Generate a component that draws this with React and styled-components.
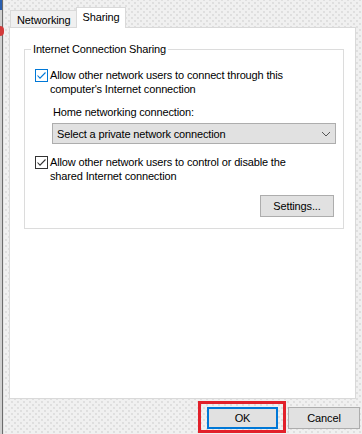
import React from "react";
import styled, { createGlobalStyle } from "styled-components";

const Global = createGlobalStyle`
  html, body { margin: 0; padding: 0; }
  body {
    font-family: "Liberation Sans", Arial, sans-serif;
    font-size: 11px;
    letter-spacing: -0.15px;
    color: #000;
    background: #f0f0f0;
  }
`;

const Screen = styled.div`
  display: flex;
  width: 362px;
  height: 434px;
  overflow: hidden;
  background-color: #f0f0f0;
  background-image:
    radial-gradient(circle, #dedede 0.7px, transparent 1px),
    radial-gradient(circle, #dedede 0.7px, transparent 1px);
  background-size: 6px 6px, 6px 6px;
  background-position: 0 0, 3px 3px;
`;

const LeftEdge = styled.div`
  width: 4px;
  flex: none;
  display: flex;
  flex-direction: column;
  background: linear-gradient(
    to right,
    #d0d0d0 0,
    #d0d0d0 2px,
    #6b6b6b 2px,
    #6b6b6b 3px,
    #e4e4e4 3px
  );
`;

const EdgeBit = styled.div`
  height: ${(p) => p.$h}px;
  width: ${(p) => p.$w}px;
  margin-top: ${(p) => p.$top || 0}px;
  background: ${(p) => p.$color};
  border-radius: ${(p) => (p.$round ? "0 5px 5px 0" : "0")};
`;

const Dialog = styled.div`
  flex: 1;
  display: flex;
  flex-direction: column;
  padding: 7px 2px 0 5px;
  width: 347px;
`;

const TabRow = styled.div`
  display: flex;
  align-items: flex-end;
  height: 21px;
  padding-left: 1px;
  margin-bottom: -1px;
  position: relative;
  z-index: 1;
`;

const Tab = styled.div`
  box-sizing: border-box;
  height: ${(p) => (p.$active ? 21 : 18)}px;
  padding: ${(p) => (p.$active ? "3px 6px 0 6px" : "3px 5px 0 6px")};
  margin-left: ${(p) => (p.$active ? -1 : 0)}px;
  background: ${(p) => (p.$active ? "#fff" : "#f0f0f0")};
  border: 1px solid #d9d9d9;
  border-bottom: ${(p) => (p.$active ? "none" : "1px solid #d9d9d9")};
  line-height: 12px;
  white-space: nowrap;
`;

const Panel = styled.div`
  box-sizing: border-box;
  width: 347px;
  height: 372px;
  background: #fff;
  border: 1px solid #d9d9d9;
  padding: 14px 11px 0 14px;
`;

const Group = styled.fieldset`
  margin: 0;
  border: 1px solid #dcdcdc;
  padding: 12px 7px 11px 10px;
  display: flex;
  flex-direction: column;
  min-width: 0;
`;

const Legend = styled.legend`
  padding: 0 2px;
  margin-left: -4px;
  line-height: 14px;
`;

const CheckRow = styled.div`
  display: flex;
  align-items: flex-start;
  margin-top: ${(p) => p.$top || 0}px;
`;

const Box = styled.span`
  box-sizing: border-box;
  flex: none;
  width: 13px;
  height: 13px;
  margin-top: 1px;
  margin-right: 2px;
  border: 1px solid ${(p) => p.$color};
  background: #fff;
  display: flex;
  align-items: center;
  justify-content: center;
`;

const CheckText = styled.span`
  line-height: 14px;
`;

const Indent = styled.div`
  display: flex;
  flex-direction: column;
  padding-left: 17px;
`;

const Label = styled.div`
  margin-top: 9px;
  padding-left: 1px;
  line-height: 14px;
`;

const Select = styled.div`
  box-sizing: border-box;
  margin-top: 4px;
  height: 21px;
  background: #e1e1e1;
  border: 1px solid #adadad;
  display: flex;
  align-items: center;
  justify-content: space-between;
  padding: 0 4px 0 4px;
`;

const ButtonRow = styled.div`
  display: flex;
  justify-content: flex-end;
  margin-top: 12px;
  padding-right: 2px;
`;

const Button = styled.div`
  box-sizing: border-box;
  width: ${(p) => p.$w}px;
  height: 22px;
  background: #e1e1e1;
  border: 1px solid ${(p) => (p.$focus ? "#0078d7" : "#adadad")};
  box-shadow: ${(p) => (p.$focus ? "inset 0 0 0 1px #0078d7" : "none")};
  display: flex;
  align-items: center;
  justify-content: center;
  margin-top: ${(p) => p.$top || 0}px;
  margin-left: ${(p) => p.$left || 0}px;
`;

const Footer = styled.div`
  display: flex;
  justify-content: flex-end;
  align-items: flex-start;
  padding-top: 2px;
`;

const Highlight = styled.div`
  border: 3px solid #e2202a;
  padding: 3px 5px 1px 6px;
`;

const Check = ({ color }) => (
  <svg width="11" height="11" viewBox="0 0 11 11">
    <polyline
      points="1.5,5.5 4,8.2 9.5,2.5"
      fill="none"
      stroke={color}
      strokeWidth="1.1"
    />
  </svg>
);

const Chevron = () => (
  <svg width="10" height="6" viewBox="0 0 10 6">
    <polyline points="1,1 5,5 9,1" fill="none" stroke="#555" strokeWidth="1" />
  </svg>
);

export default function App() {
  return (
    <>
      <Global />
      <Screen>
        <LeftEdge>
          <EdgeBit $h={10} $w={2} $color="#2a5fb0" />
          <EdgeBit $h={10} $w={4} $top={16} $color="#d23a3a" $round />
        </LeftEdge>
        <Dialog>
          <TabRow>
            <Tab>Networking</Tab>
            <Tab $active>Sharing</Tab>
          </TabRow>
          <Panel>
            <Group>
              <Legend>Internet Connection Sharing</Legend>
              <CheckRow>
                <Box $color="#0078d7">
                  <Check color="#0078d7" />
                </Box>
                <CheckText>
                  Allow other network users to connect through this
                  <br />
                  computer's Internet connection
                </CheckText>
              </CheckRow>
              <Indent>
                <Label>Home networking connection:</Label>
                <Select>
                  <span>Select a private network connection</span>
                  <Chevron />
                </Select>
              </Indent>
              <CheckRow $top={11}>
                <Box $color="#333">
                  <Check color="#333" />
                </Box>
                <CheckText>
                  Allow other network users to control or disable the
                  <br />
                  shared Internet connection
                </CheckText>
              </CheckRow>
              <ButtonRow>
                <Button $w={74}>Settings...</Button>
              </ButtonRow>
            </Group>
          </Panel>
          <Footer>
            <Highlight>
              <Button $w={71} $focus>
                OK
              </Button>
            </Highlight>
            <Button $w={72} $top={6} $left={2}>
              Cancel
            </Button>
          </Footer>
        </Dialog>
      </Screen>
    </>
  );
}
